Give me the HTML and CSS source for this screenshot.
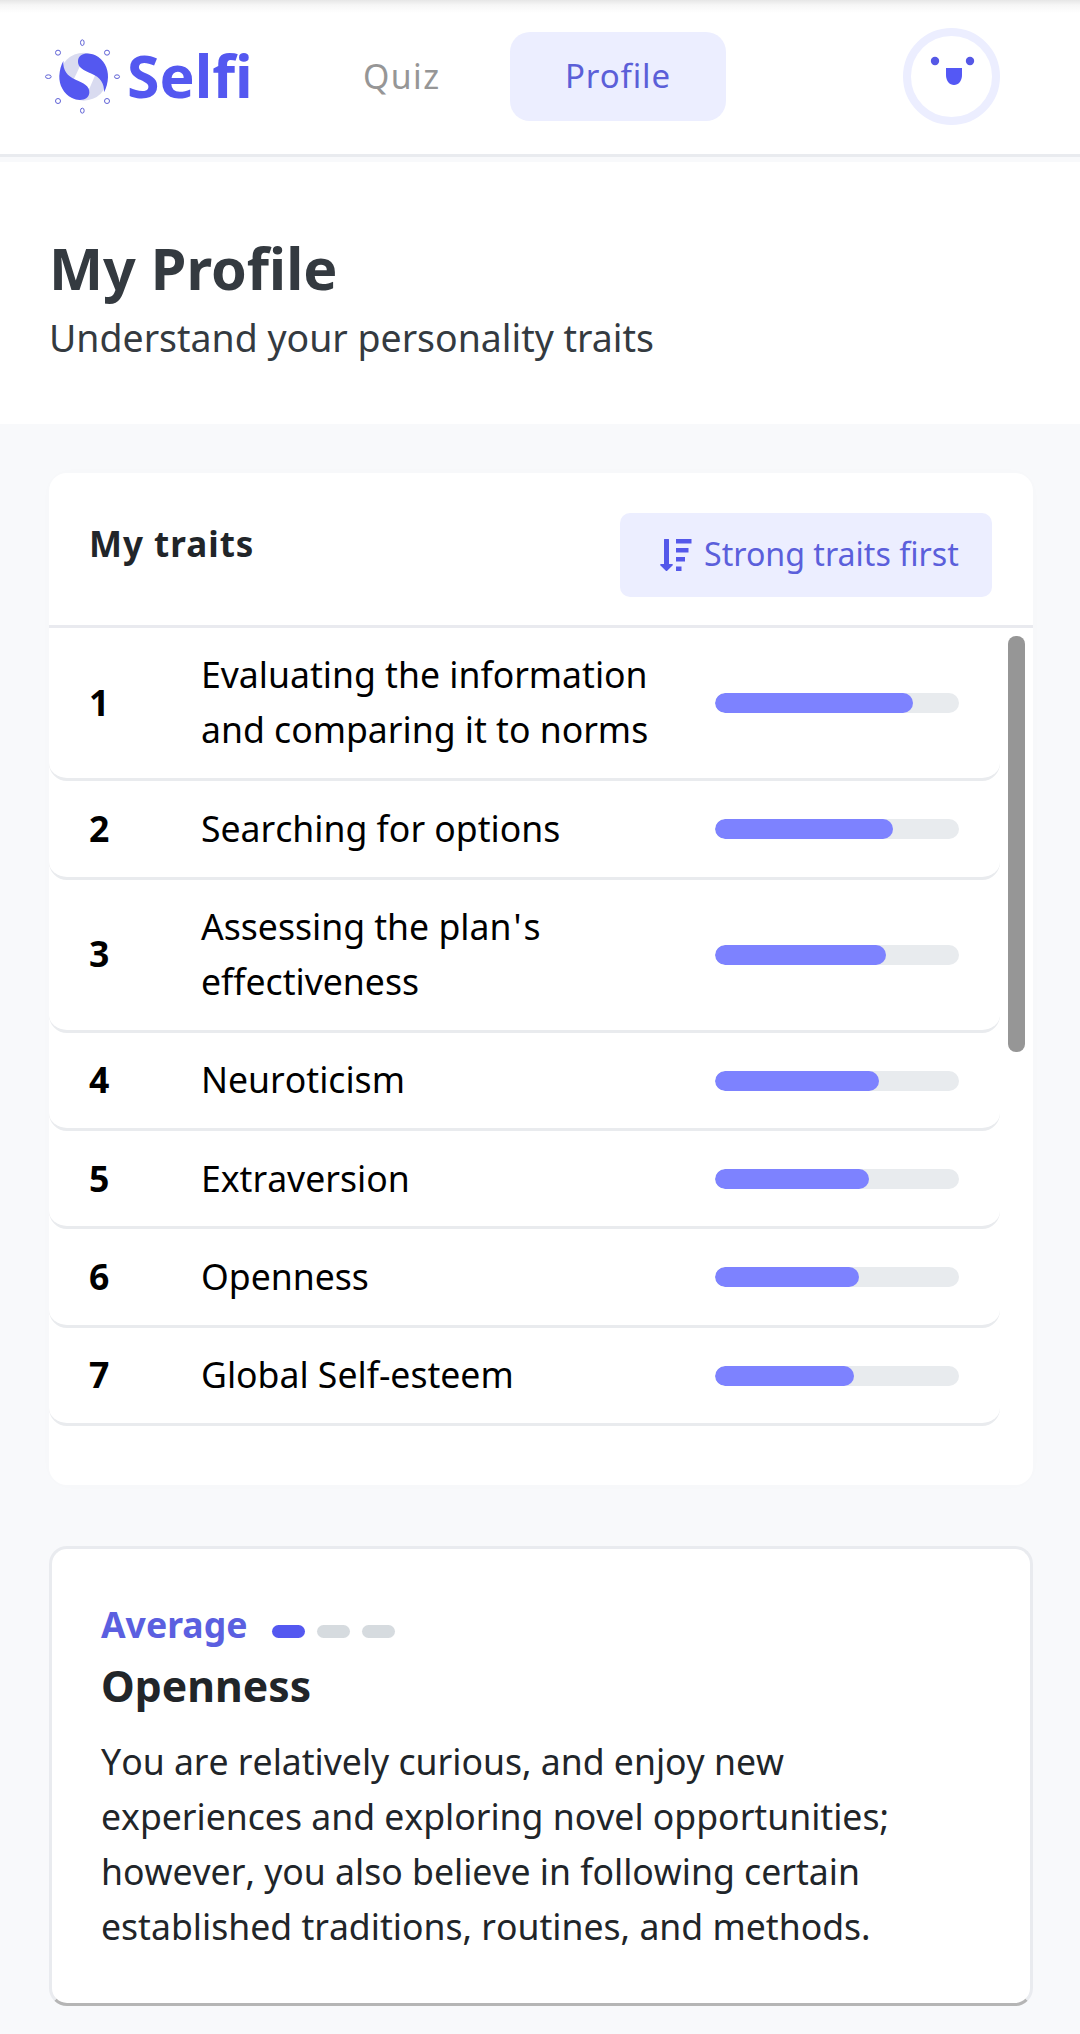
FILE: index.html
```html
<!DOCTYPE html>
<html lang="en">
<head>
<meta charset="utf-8">
<title>Selfi – My Profile</title>
<link rel="stylesheet" href="styles.css">
</head>
<body>
<header class="topbar">
  <a class="brand">
    <svg class="brand-mark" viewBox="42 48 234 240" aria-hidden="true">
      <circle cx="161" cy="170" r="72" fill="#d9dbf0"/>
      <path fill="#fff" d="M152 134L198 160L178 206L130 181Z"/>
      <path id="swirl" fill="#5458f0" d="M144 122C146 98 176 96 196 106C222 119 235 146 234 172C233 190 229 204 222 217C224 190 210 171 185 161C162 151 142 142 144 122Z"/>
      <use href="#swirl" transform="rotate(180 161 170)"/>
      <g fill="none" stroke="#5f62d6" stroke-width="3">
        <ellipse cx="157" cy="68" rx="5.500" ry="8.500"/>
        <ellipse cx="157" cy="272" rx="5.500" ry="7.500"/>
        <ellipse cx="55" cy="170" rx="8.500" ry="5.500"/>
        <ellipse cx="261" cy="170" rx="7.500" ry="5.500"/>
        <circle cx="84" cy="98" r="7.500"/>
        <circle cx="231" cy="98" r="7.500"/>
        <circle cx="84" cy="243" r="7.500"/>
        <circle cx="231" cy="243" r="7.500"/>
      </g>
    </svg>
    <span class="brand-name">Selfi</span>
  </a>
  <nav class="nav">
    <a class="nav-link">Quiz</a>
    <a class="nav-link active">Profile</a>
  </nav>
  <svg class="avatar" viewBox="0 0 97 97" aria-hidden="true">
    <circle cx="48.500" cy="48.500" r="44.500" fill="#fff" stroke="#eceeff" stroke-width="8"/>
    <circle cx="32" cy="33" r="4.200" fill="#5558e6"/>
    <circle cx="67" cy="33" r="4.200" fill="#5558e6"/>
    <path d="M43 40H59V47C59 53 55.500 57 51 57S43 53 43 47Z" fill="#5458f5"/>
  </svg>
</header>

<section class="intro">
  <h1 class="title">My Profile</h1>
  <p class="subtitle">Understand your personality traits</p>
</section>

<main class="content">
  <section class="traits">
    <div class="traits-head">
      <h2 class="traits-title">My traits</h2>
      <button class="sort">
        <svg class="sort-icon" viewBox="0 0 32 33" aria-hidden="true">
          <path fill="#5458ea" d="M4 0.500Q4 0 4.500 0H8.500Q9 0 9 0.500V25H12Q13.500 25.200 12.500 26.500L7.200 31.800Q6.500 32.300 5.800 31.800L0.500 26.500Q-.4 25.200 1 25H4ZM16 0H31.500V4.500H16ZM16 9H28.500V13.500H16ZM16 18H25V22.500H16ZM16 27.500H21.500V32H16Z"/>
        </svg>
        <span class="sort-label">Strong traits first</span>
      </button>
    </div>
    <div class="scroller">
      <ol class="list">
        <li class="row"><b class="rank">1</b><span class="name">Evaluating the information and comparing it to norms</span><span class="bar"><i class="fill" style="width:81.200%"></i></span></li>
        <li class="row"><b class="rank">2</b><span class="name">Searching for options</span><span class="bar"><i class="fill" style="width:73%"></i></span></li>
        <li class="row"><b class="rank">3</b><span class="name">Assessing the plan<span class="apostrophe">'</span>s effectiveness</span><span class="bar"><i class="fill" style="width:70%"></i></span></li>
        <li class="row"><b class="rank">4</b><span class="name">Neuroticism</span><span class="bar"><i class="fill" style="width:67.200%"></i></span></li>
        <li class="row"><b class="rank">5</b><span class="name">Extraversion</span><span class="bar"><i class="fill" style="width:63%"></i></span></li>
        <li class="row"><b class="rank">6</b><span class="name">Openness</span><span class="bar"><i class="fill" style="width:59%"></i></span></li>
        <li class="row"><b class="rank">7</b><span class="name">Global Self-esteem</span><span class="bar"><i class="fill" style="width:57%"></i></span></li>
      </ol>
      <div class="track"><div class="thumb"></div></div>
    </div>
  </section>

  <article class="detail">
    <div class="level">
      <span class="level-name">Average</span>
      <span class="pips"><i class="pip on"></i><i class="pip"></i><i class="pip"></i></span>
    </div>
    <h3 class="detail-title">Openness</h3>
    <p class="detail-text">You are relatively curious, and enjoy new experiences and exploring novel opportunities; however, you also believe in following certain established traditions, routines, and methods.</p>
  </article>
</main>
</body>
</html>
```
FILE: styles.css
```css
* { box-sizing: border-box; }
body {
  margin: 0;
  height: 2034px;
  overflow: hidden;
  background: #f8f9fb;
  color: #212529;
  font: 35.600px/55px "Noto Sans", sans-serif;
}
h1, h2, h3, p, ol { margin: 0; padding: 0; }

.topbar {
  display: flex;
  align-items: flex-start;
  height: 157px;
  border-bottom: 3px solid #e9ebef;
  background: linear-gradient(#e6e6e6, #f6f6f6 5px, #fff 13px);
}
.brand { display: flex; width: 329px; padding: 36px 0 0 44px; }
.brand-mark { width: 78px; height: 80px; }
.brand-name {
  margin: 9px 0 0 5px;
  color: #5458f0;
  font-size: 59px;
  font-weight: 700;
  line-height: 60px;
}
.nav { display: flex; padding-top: 32px; }
.nav-link {
  width: 145px;
  padding: 0 0 0 34px;
  color: #969696;
  font-size: 33.800px;
  line-height: 89px;
  height: 89px;
  letter-spacing: 1.400px;
}
.nav-link.active {
  width: 216px;
  margin-left: 36px;
  padding: 0 0 0 55px;
  border-radius: 20px;
  background: #eceeff;
  color: #5b5fd8;
  font-size: 33px;
  line-height: 88px;
  letter-spacing: 0.850px;
}
.avatar { width: 97px; height: 97px; margin: 28px 0 0 177px; }

.intro {
  height: 262px;
  margin-top: 5px;
  padding: 68px 49px 0;
  background: #fff;
  color: #343a40;
}
.title { font-size: 57.400px; line-height: 76px; }
.subtitle { margin-top: 2px; font-size: 37.450px; line-height: 60px; }

.content { padding: 49px 47px 0 49px; }
.traits {
  height: 1012px;
  border-radius: 18px;
  background: #fff;
  box-shadow: 0 0 18px rgba(0, 0, 0, .012);
}
.traits-head {
  display: flex;
  justify-content: space-between;
  height: 155px;
  padding: 40px 41px 0 40px;
  border-bottom: 3px solid #e9eaef;
}
.traits-title { margin-top: 3px; font-size: 35px; letter-spacing: 1px; }
.sort {
  display: flex;
  align-items: center;
  width: 372px;
  height: 84px;
  padding: 0 0 0 40px;
  border: 0;
  border-radius: 10px;
  background: #eceeff;
  color: #5b5fdb;
  font: 32.150px/82px "Noto Sans", sans-serif;
  white-space: nowrap;
}
.sort-icon { width: 32px; height: 33px; margin-right: 12px; }
.sort-label { height: 84px; }
.scroller { display: flex; }
.list { width: 951px; list-style: none; color: #000; }
.row {
  display: grid;
  grid-template-columns: 112px 514px 244px;
  align-items: center;
  padding: 19.400px 0 20.900px 40px;
  border-bottom: 3px solid #e9ebee;
  border-radius: 18px;
}
.name { padding-right: 40px; font-kerning: none; }
.apostrophe { letter-spacing: 2px; margin-left: 2px; }
.bar { height: 20px; margin-top: 2px; border-radius: 10px; background: #e8ebee; overflow: hidden; }
.fill { display: block; height: 20px; border-radius: 10px; background: #7d82ff; }
.track { padding: 8px 0 0 8px; }
.thumb { width: 17px; height: 416px; border-radius: 8px; background: #969696; }

.detail {
  height: 460px;
  margin-top: 61px;
  padding: 48px 49px 0;
  border: 3px solid #e9ebef;
  border-bottom-color: #b5b5b5;
  border-radius: 18px;
  background: #fff;
}
.level { display: flex; align-items: center; color: #5b5fe0; font-weight: 700; }
.pips { display: flex; gap: 12px; margin: 13px 0 0 25px; }
.pip { width: 33px; height: 13px; border-radius: 7px; background: #d6dbdf; }
.pip.on { background: #5458f0; }
.detail-title { margin-top: 4px; font-size: 42.700px; line-height: 60px; }
.detail-text { margin-top: 18px; font-kerning: none; }
```
